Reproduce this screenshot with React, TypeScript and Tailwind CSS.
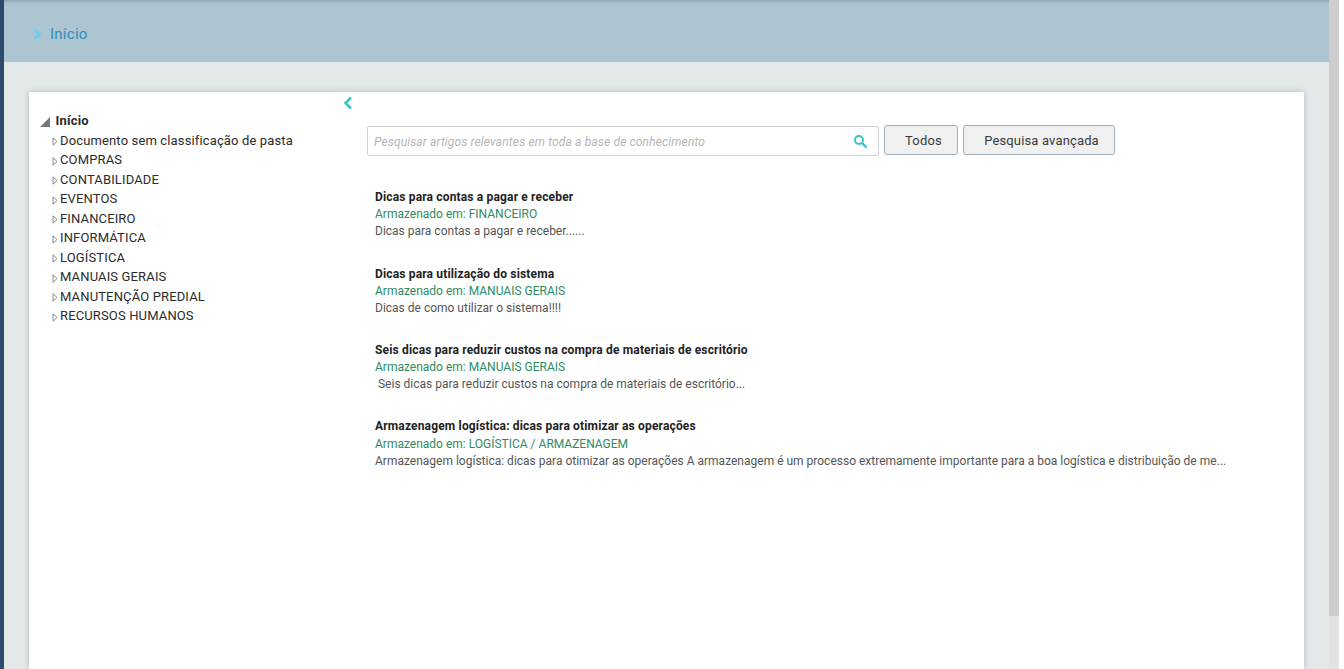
import React from "react";

const tree = ["Documento sem classificação de pasta","COMPRAS","CONTABILIDADE","EVENTOS","FINANCEIRO","INFORMÁTICA","LOGÍSTICA","MANUAIS GERAIS","MANUTENÇÃO PREDIAL","RECURSOS HUMANOS"];
const results = [
  { t: "Dicas para contas a pagar e receber", s: "Armazenado em: FINANCEIRO", d: "Dicas para contas a pagar e receber......" },
  { t: "Dicas para utilização do sistema", s: "Armazenado em: MANUAIS GERAIS", d: "Dicas de como utilizar o sistema!!!!" },
  { t: "Seis dicas para reduzir custos na compra de materiais de escritório", s: "Armazenado em: MANUAIS GERAIS", d: "\u00a0Seis dicas para reduzir custos na compra de materiais de escritório..." },
  { t: "Armazenagem logística: dicas para otimizar as operações", s: "Armazenado em: LOGÍSTICA / ARMAZENAGEM", d: "Armazenagem logística: dicas para otimizar as operações A armazenagem é um processo extremamente importante para a boa logística e distribuição de me..." },
];

export default function App() {
  return (
    <div className="flex h-[669px] w-[1344px] overflow-hidden bg-white font-['Roboto',sans-serif]">
      <div className="w-[4px] shrink-0 bg-[#2c4a6e]" />
      <div className="flex w-[1325px] shrink-0 flex-col bg-[#e3e8eb]">
        <header className="flex h-[62px] shrink-0 items-center gap-[8px] bg-[#adc4d1] bg-[linear-gradient(#8fa5b1_0,#a9c0cd_3px,#adc4d1_5px)] pl-[29px] pt-[5px]">
          <svg width="9" height="12" viewBox="0 0 9 12" fill="none" stroke="#62d3ec" strokeWidth="2.6"><path d="M1.5 1l5 5-5 5" /></svg>
          <span className="pt-[1px] text-[15px] tracking-[0.25px] text-[#2f8fbd]">Início</span>
        </header>
        <div className="ml-[25px] mt-[30px] flex w-[1275px] flex-1 bg-white shadow-[0_0_6px_rgba(0,0,0,0.2)]">
          <aside className="relative w-[322px] shrink-0 pl-[11px] pt-[20px] text-[13px] text-[#2b2b2b]">
            <div className="flex h-[18px] items-center">
              <svg width="10" height="10" viewBox="0 0 10 10" className="mt-[2px]"><path d="M10 0v10H0z" fill="#777" /></svg>
              <span className="ml-[5.5px] font-bold tracking-[0.2px]">Início</span>
            </div>
            <ul className="mt-[0.75px] pl-[12px]">
              {tree.map((x) => (
                <li key={x} className="flex h-[19.5px] items-center whitespace-nowrap tracking-[0.14px]">
                  <svg width="6" height="9" viewBox="0 0 6 9" className="mt-[2px] mr-[2px] shrink-0" fill="none" stroke="#888"><path d="M1 .8l4 3.7-4 3.7z" /></svg>
                  {x}
                </li>
              ))}
            </ul>
          </aside>
          <main className="min-w-0 flex-1">
            <svg width="10" height="14" viewBox="0 0 10 14" fill="none" stroke="#3fc1c4" strokeWidth="2.6" className="-ml-[8px] mt-[4px]"><path d="M8 1.5L2.5 7 8 12.5" /></svg>
            <div className="ml-[16px] mt-[15px] flex items-start">
              <div className="mt-[1px] flex h-[30px] w-[512px] items-center justify-between rounded-[2px] border border-[#cfd2d4] pl-[6px] pr-[10px]">
                <span className="pt-[1px] text-[12px] italic tracking-[0.15px] text-[#b5b5b5]">Pesquisar artigos relevantes em toda a base de conhecimento</span>
                <svg width="15" height="15" viewBox="0 0 15 15" fill="none" stroke="#3fc1c4"><circle cx="6" cy="6" r="4" strokeWidth="2" /><path d="M9 9l4.5 4.5" strokeWidth="2.4" /></svg>
              </div>
              <button className="ml-[5px] h-[30px] w-[74px] rounded-[3px] border border-[#9fb1bf] bg-[#f0f0f0] pl-[5px] pt-[1px] text-[13px] tracking-[0.2px] text-[#3a3a3a]">Todos</button>
              <button className="ml-[5px] h-[30px] w-[152px] rounded-[3px] border border-[#9fb1bf] bg-[#f0f0f0] pl-[5px] pt-[1px] text-[13px] tracking-[0.15px] text-[#3a3a3a]">Pesquisa avançada</button>
            </div>
            <div className="ml-[24px] mt-[33.2px] flex flex-col gap-[25px]">
              {results.map((r) => (
                <article key={r.t} className="text-[12px] leading-[17.14px]">
                  <h3 className="font-bold tracking-[0.16px] text-[#222]">{r.t}</h3>
                  <p className="text-[#2e8b62]">{r.s}</p>
                  <p className="text-[#555]">{r.d}</p>
                </article>
              ))}
            </div>
          </main>
        </div>
      </div>
      <div className="flex w-[10px] shrink-0 flex-col">
        <div className="h-[616px] bg-[#cdcdcd]" />
        <div className="flex-1 bg-[#e2e2e2]" />
      </div>
    </div>
  );
}
